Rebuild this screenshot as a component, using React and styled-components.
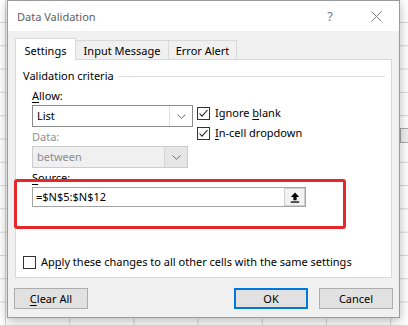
import React from "react";
import styled, { createGlobalStyle } from "styled-components";

const GlobalStyle = createGlobalStyle`
  html, body { margin: 0; padding: 0; }
  body {
    width: 408px;
    height: 326px;
    overflow: hidden;
    font-family: "Segoe UI", "Noto Sans", "Open Sans", sans-serif;
    font-size: 11px;
    color: #000;
    background-color: #fff;
    background-image:
      linear-gradient(to right, #d6d6d6 1px, transparent 1px),
      linear-gradient(to bottom, #d6d6d6 1px, transparent 1px);
    background-size: 64.2px 100%, 100% 23.3px;
    background-position: 5px 0, 0 22px;
  }
`;

const Sheet = styled.div`
  position: relative;
  width: 408px;
  height: 326px;
  padding-left: 7px;
  box-sizing: border-box;
`;

const CellDropdown = styled.div`
  position: absolute;
  left: 400px;
  top: 128px;
  width: 14px;
  height: 15px;
  box-sizing: border-box;
  border: 1px solid #a9a9a9;
  background: #f0f0f0;
`;

const Dialog = styled.div`
  position: relative;
  z-index: 1;
  width: 393px;
  box-sizing: border-box;
  border: 1px solid #9a9a9a;
  background: #f0f0f0;
  box-shadow: 0 3px 10px rgba(0, 0, 0, 0.28);
  display: flex;
  flex-direction: column;
`;

const TitleBar = styled.div`
  height: 30px;
  background: #fff;
  display: flex;
  align-items: center;
  padding-left: 9px;
`;

const Title = styled.div`
  flex: 1;
  color: #606060;
  font-size: 11px;
`;

const TitleButton = styled.div`
  width: 46px;
  height: 30px;
  display: flex;
  align-items: center;
  justify-content: center;
  color: #7a7a7a;
  font-size: 13px;
`;

const Body = styled.div`
  padding: 0 7px 8px 7px;
  display: flex;
  flex-direction: column;
`;

const TabRow = styled.div`
  margin-top: 7px;
  height: 21px;
  display: flex;
  align-items: flex-end;
`;

const Tab = styled.div`
  position: relative;
  z-index: ${(p) => (p.$active ? 2 : 0)};
  width: ${(p) => p.$w}px;
  height: ${(p) => (p.$active ? 22 : 19)}px;
  margin-bottom: ${(p) => (p.$active ? -1 : 0)}px;
  margin-left: ${(p) => (p.$first ? 0 : -1)}px;
  box-sizing: border-box;
  border: 1px solid #d9d9d9;
  border-bottom: none;
  background: ${(p) => (p.$active ? "#fff" : "#f0f0f0")};
  display: flex;
  justify-content: center;
  padding-top: ${(p) => (p.$active ? 4 : 2)}px;
  line-height: 15px;
`;

const Panel = styled.div`
  position: relative;
  width: 377px;
  height: 219px;
  box-sizing: border-box;
  border: 1px solid #d9d9d9;
  background: #fff;
  display: flex;
  flex-direction: column;
  padding: 8px 0 7px 7px;
`;

const Legend = styled.div`
  display: flex;
  align-items: center;
  height: 16px;
  line-height: 16px;
  gap: 5px;
`;

const LegendLine = styled.div`
  flex: 1;
  height: 1px;
  background: #dcdcdc;
  margin-right: 6px;
`;

const Criteria = styled.div`
  margin-left: 9px;
  margin-top: 3px;
  display: flex;
  flex-direction: column;
`;

const Row = styled.div`
  display: flex;
  align-items: flex-start;
`;

const Column = styled.div`
  display: flex;
  flex-direction: column;
`;

const FieldLabel = styled.div`
  height: 17px;
  line-height: 17px;
  color: ${(p) => (p.$disabled ? "#8f8f8f" : "#000")};
`;

const Key = styled.span`
  text-decoration: underline;
  text-underline-offset: 2px;
`;

const Combo = styled.div`
  width: ${(p) => p.$w}px;
  height: 22px;
  margin: 1px 0;
  box-sizing: border-box;
  border: 1px solid ${(p) => (p.$disabled ? "#cccccc" : "#8a8a8a")};
  background: ${(p) => (p.$disabled ? "#f0f0f0" : "#fff")};
  display: flex;
`;

const ComboText = styled.div`
  flex: 1;
  padding-left: 4px;
  line-height: 20px;
  color: ${(p) => (p.$disabled ? "#8d8d8d" : "#000")};
`;

const ComboButton = styled.div`
  width: 22px;
  border-left: 1px solid ${(p) => (p.$disabled ? "#d6d6d6" : "#e0e0e0")};
  background: ${(p) => (p.$disabled ? "#e6e6e6" : "#fff")};
  display: flex;
  align-items: center;
  justify-content: center;
`;

const CheckColumn = styled.div`
  margin-left: 4px;
  padding-top: 16px;
  display: flex;
  flex-direction: column;
`;

const CheckRow = styled.label`
  height: 20px;
  display: flex;
  align-items: center;
  gap: 5px;
  line-height: 16px;
`;

const Box = styled.span`
  width: 13px;
  height: 13px;
  box-sizing: border-box;
  border: 1px solid #333;
  background: #fff;
  display: flex;
  align-items: center;
  justify-content: center;
`;

const SourceInput = styled.div`
  width: 274px;
  height: 20px;
  margin-top: 1px;
  box-sizing: border-box;
  border: 1px solid #a3a3a3;
  background: #fff;
  display: flex;
`;

const SourceText = styled.div`
  flex: 1;
  padding-left: 3px;
  line-height: 18px;
`;

const RefButton = styled.div`
  width: 21px;
  box-sizing: border-box;
  border: 1px solid #d0d0d0;
  background: #f2f2f2;
  display: flex;
  align-items: center;
  justify-content: center;
`;

const ApplyRow = styled.label`
  margin-top: auto;
  height: 16px;
  display: flex;
  align-items: center;
  gap: 5px;
  line-height: 16px;
`;

const Highlight = styled.div`
  position: absolute;
  left: -2px;
  top: 119px;
  width: 332px;
  height: 50px;
  box-sizing: border-box;
  border: 3px solid #e5282c;
  border-radius: 3px;
  pointer-events: none;
`;

const ButtonRow = styled.div`
  margin: 10px -1px 0 -1px;
  display: flex;
  gap: 11px;
`;

const Spacer = styled.div`
  flex: 1;
`;

const Button = styled.button`
  width: 74px;
  height: 21px;
  box-sizing: border-box;
  border: ${(p) => (p.$primary ? "2px solid #0078d7" : "1px solid #adadad")};
  background: #e1e1e1;
  font-family: inherit;
  font-size: 11px;
  color: #000;
  padding: 0;
  line-height: 17px;
`;

const Check = () => (
  <svg width="11" height="11" viewBox="0 0 11 11">
    <polyline points="1.5,5.5 4,8.2 9.5,2" fill="none" stroke="#222" strokeWidth="1.1" />
  </svg>
);

const Chevron = () => (
  <svg width="9" height="5" viewBox="0 0 9 5">
    <polyline points="0.5,0.5 4.5,4.3 8.5,0.5" fill="none" stroke="#6d6d6d" strokeWidth="1" />
  </svg>
);

const CollapseIcon = () => (
  <svg width="10" height="11" viewBox="0 0 10 11">
    <path d="M5 0.5 L9.2 5 H6.6 V8.3 H3.4 V5 H0.8 Z" fill="#000" />
    <rect x="0.8" y="9.4" width="8.4" height="1.3" fill="#000" />
  </svg>
);

const CloseIcon = () => (
  <svg width="11" height="11" viewBox="0 0 11 11">
    <path d="M0.5 0.5 L10.5 10.5 M10.5 0.5 L0.5 10.5" stroke="#7a7a7a" strokeWidth="1" />
  </svg>
);

export default function App() {
  return (
    <>
      <GlobalStyle />
      <Sheet>
        <CellDropdown />
        <Dialog>
          <TitleBar>
            <Title>Data Validation</Title>
            <TitleButton>?</TitleButton>
            <TitleButton>
              <CloseIcon />
            </TitleButton>
          </TitleBar>
          <Body>
            <TabRow>
              <Tab $w={61} $first $active>Settings</Tab>
              <Tab $w={94}>Input Message</Tab>
              <Tab $w={69}>Error Alert</Tab>
            </TabRow>
            <Panel>
              <Legend>
                Validation criteria
                <LegendLine />
              </Legend>
              <Criteria>
                <Row>
                  <Column>
                    <FieldLabel>
                      <Key>A</Key>llow:
                    </FieldLabel>
                    <Combo $w={161}>
                      <ComboText>List</ComboText>
                      <ComboButton>
                        <Chevron />
                      </ComboButton>
                    </Combo>
                    <FieldLabel $disabled>Data:</FieldLabel>
                    <Combo $w={156} $disabled>
                      <ComboText $disabled>between</ComboText>
                      <ComboButton $disabled>
                        <Chevron />
                      </ComboButton>
                    </Combo>
                  </Column>
                  <CheckColumn>
                    <CheckRow>
                      <Box>
                        <Check />
                      </Box>
                      <span>
                        Ignore <Key>b</Key>lank
                      </span>
                    </CheckRow>
                    <CheckRow>
                      <Box>
                        <Check />
                      </Box>
                      <span>
                        <Key>I</Key>n-cell dropdown
                      </span>
                    </CheckRow>
                  </CheckColumn>
                </Row>
                <FieldLabel>
                  <Key>S</Key>ource:
                </FieldLabel>
                <SourceInput>
                  <SourceText>=$N$5:$N$12</SourceText>
                  <RefButton>
                    <CollapseIcon />
                  </RefButton>
                </SourceInput>
              </Criteria>
              <ApplyRow>
                <Box />
                <span>
                  Ap<Key>p</Key>ly these changes to all other cells with the same settings
                </span>
              </ApplyRow>
              <Highlight />
            </Panel>
            <ButtonRow>
              <Button>
                <Key>C</Key>lear All
              </Button>
              <Spacer />
              <Button $primary>OK</Button>
              <Button>Cancel</Button>
            </ButtonRow>
          </Body>
        </Dialog>
      </Sheet>
    </>
  );
}
